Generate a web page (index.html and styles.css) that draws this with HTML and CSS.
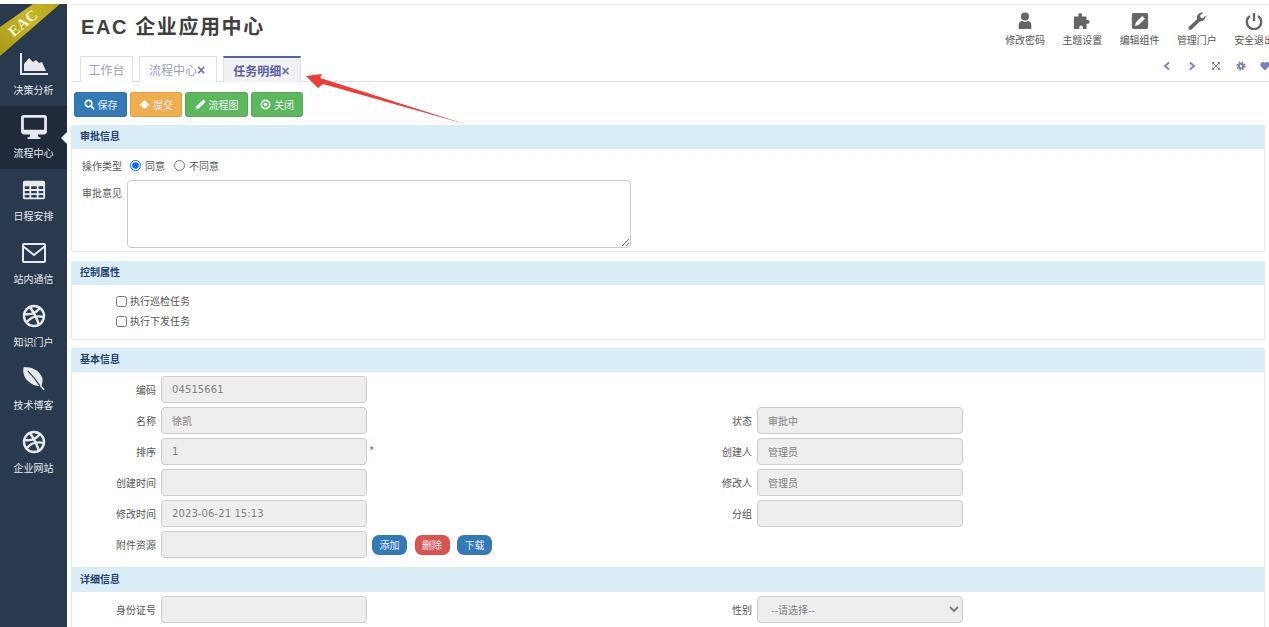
FILE: index.html
```html
<!DOCTYPE html>
<html lang="zh">
<head>
<meta charset="utf-8">
<title>EAC 企业应用中心</title>
<link rel="stylesheet" href="styles.css">
</head>
<body>
<div class="app">
  <aside class="sidebar">
    <div class="ribbon"></div>
    <div class="ribbon-text">EAC</div>
    <nav class="nav">
      <a class="nav-item">
        <svg class="nav-icon" viewBox="0 0 28 22"><path d="M0 0h2v20h26v2H0z"/><path d="M4 18V11l5-6 4 4 3-2 3 3 3-1 4 9z"/></svg>
        <span>决策分析</span>
      </a>
      <a class="nav-item active">
        <svg class="nav-icon" viewBox="0 0 28 26"><path fill-rule="evenodd" d="M3 0h22a3 3 0 0 1 3 3v15a3 3 0 0 1-3 3h-7l1 3h2v2H7v-2h2l1-3H3a3 3 0 0 1-3-3V3a3 3 0 0 1 3-3zm0 3v13h22V3z"/></svg>
        <span>流程中心</span>
      </a>
      <a class="nav-item">
        <svg class="nav-icon" viewBox="-1.500 -3 27 26"><path fill-rule="evenodd" d="M2 0h20a2 2 0 0 1 2 2v16a2 2 0 0 1-2 2H2a2 2 0 0 1-2-2V2a2 2 0 0 1 2-2zm0 6v3h5V6zm7 0v3h6V6zm8 0v3h5V6zM2 11v2.500h5V11zm7 0v2.500h6V11zm8 0v2.500h5V11zM2 15.500V18h5v-2.500zm7 0V18h6v-2.500zm8 0V18h5v-2.500z"/></svg>
        <span>日程安排</span>
      </a>
      <a class="nav-item">
        <svg class="nav-icon" viewBox="-2 -2 28 24"><path fill-rule="evenodd" d="M2 0h20a2 2 0 0 1 2 2v16a2 2 0 0 1-2 2H2a2 2 0 0 1-2-2V2a2 2 0 0 1 2-2zm0 2v.800l10 8 10-8V2zm0 3.300V18h20V5.300l-10 8z"/></svg>
        <span>站内通信</span>
      </a>
      <a class="nav-item">
        <svg class="nav-icon ball" viewBox="0 0 24 24"><circle cx="12" cy="12" r="10"/><path d="M8 3c4 6 8 13 9 19M3 10c6 1 11-1 15-6M5 18c3-4 8-7 17-5"/></svg>
        <span>知识门户</span>
      </a>
      <a class="nav-item">
        <svg class="nav-icon" viewBox="1 1 23 25"><path d="M2 1c8 0 16 3 19 11 1 4 0 7-1 9C12 21 4 16 2 9 1 6 1 3 2 1z"/><path class="vein" d="M6 5c5 5 9 10 13 16"/><path class="stem" d="M19 20l4 5"/></svg>
        <span>技术博客</span>
      </a>
      <a class="nav-item">
        <svg class="nav-icon ball" viewBox="0 0 24 24"><circle cx="12" cy="12" r="10"/><path d="M8 3c4 6 8 13 9 19M3 10c6 1 11-1 15-6M5 18c3-4 8-7 17-5"/></svg>
        <span>企业网站</span>
      </a>
    </nav>
  </aside>

  <main class="main">
    <header class="header">
      <div class="header-left">
        <h1 class="title">EAC 企业应用中心</h1>
        <div class="tabs">
          <a class="tab">工作台</a>
          <a class="tab">流程中心<b class="x">×</b></a>
          <a class="tab current">任务明细<b class="x">×</b></a>
        </div>
      </div>
      <div class="header-right">
        <div class="tools">
          <a class="tool">
            <svg class="tool-icon" viewBox="0 0 20 20"><circle cx="10" cy="5" r="4.500"/><path d="M3 19v-4.500c0-3 2-4.500 4-4.500l3 1 3-1c2 0 4 1.500 4 4.500V19z"/></svg>
            <span>修改密码</span>
          </a>
          <a class="tool">
            <svg class="tool-icon" viewBox="0 0 20 20"><path d="M1 5h5V3a2 2 0 1 1 4 0v2h5v4h1.500a2 2 0 1 1 0 4H15v6h-4v-2a1.800 1.800 0 1 0-4 0v2H1z"/></svg>
            <span>主题设置</span>
          </a>
          <a class="tool">
            <svg class="tool-icon" viewBox="0 0 20 20"><path fill-rule="evenodd" d="M3 1h14a2 2 0 0 1 2 2v14a2 2 0 0 1-2 2H3a2 2 0 0 1-2-2V3a2 2 0 0 1 2-2zm9.500 3.500L5.500 11.500l-1 4 4-1 7-7z"/></svg>
            <span>编辑组件</span>
          </a>
          <a class="tool">
            <svg class="tool-icon" viewBox="0 0 20 20"><path d="M1 16.500 10 8c-.8-3 .8-6.500 5-7.500 1-.1 1.700 0 2 .2L13.500 4l.5 2.500 2.500.5L19.500 3.800c.3 3.500-2 6.800-6.500 6.700L4 19.500c-1 .8-2 .7-2.800-.1-.8-.8-.9-1.900-.2-2.900z"/></svg>
            <span>管理门户</span>
          </a>
          <a class="tool">
            <svg class="tool-icon power" viewBox="0 0 20 20"><path d="M5.500 4.500a8 8 0 1 0 9 0M10 1v9"/></svg>
            <span>安全退出</span>
          </a>
        </div>
        <div class="mini">
          <svg viewBox="0 0 10 10"><path class="line" d="M7 1.500 3 5l4 3.500"/></svg>
          <svg viewBox="0 0 10 10"><path class="line" d="M3 1.500 7 5 3 8.500"/></svg>
          <svg viewBox="0 0 10 10"><path class="thin" d="M2 2l6 6M8 2 2 8"/><path d="M1 1h3L1 4zM9 1v3L6 1zM1 9V6l3 3zM9 9H6l3-3z"/></svg>
          <svg viewBox="0 0 10 10"><circle cx="5" cy="5" r="3.200"/><circle class="teeth" cx="5" cy="5" r="3.800"/><circle class="hole" cx="5" cy="5" r="1.200"/></svg>
          <svg viewBox="0 0 10 10"><path d="M5 9.500 1 5.500C-.5 3.500.8 1 3 1c1 0 1.600.5 2 1.200C5.400 1.500 6 1 7 1c2.200 0 3.500 2.500 2 4.500z"/></svg>
        </div>
      </div>
    </header>

    <div class="content">
      <div class="toolbar">
        <button class="btn blue"><svg viewBox="0 0 12 12"><circle class="ring" cx="5" cy="5" r="3.500"/><path class="ring" d="M7.500 7.500 11 11"/></svg>保存</button>
        <button class="btn orange narrow"><svg viewBox="0 0 12 12"><path d="M6 1 12 7H8.500v3h-5V7H0z"/></svg>提交</button>
        <button class="btn green wide"><svg viewBox="0 0 12 12"><path d="M9 .5 11.500 3 4 10.500 .5 11.500 1.500 8z"/></svg>流程图</button>
        <button class="btn green narrow"><svg viewBox="0 0 12 12"><circle class="ring" cx="6" cy="6" r="4.500"/><circle cx="6" cy="6" r="2"/></svg>关闭</button>
      </div>

      <section class="panel p-approve">
        <h2 class="panel-head">审批信息</h2>
        <div class="approve-body">
          <div class="approve-row">
            <span class="approve-label">操作类型</span>
            <label class="choice"><input type="radio" name="op" checked>同意</label>
            <label class="choice"><input type="radio" name="op">不同意</label>
          </div>
          <div class="approve-row top">
            <span class="approve-label">审批意见</span>
            <textarea class="opinion"></textarea>
          </div>
        </div>
      </section>

      <section class="panel p-control">
        <h2 class="panel-head">控制属性</h2>
        <div class="control-body">
          <label class="check"><input type="checkbox">执行巡检任务</label>
          <label class="check"><input type="checkbox">执行下发任务</label>
        </div>
      </section>

      <section class="panel p-basic">
        <h2 class="panel-head">基本信息</h2>
        <div class="form-grid">
          <label class="lbl">编码</label><input class="field num" disabled value="04515661"><span class="after"></span>
          <span class="lbl"></span><span class="blank"></span>

          <label class="lbl">名称</label><input class="field" disabled value="徐凯"><span class="after"></span>
          <label class="lbl">状态</label><input class="field" disabled value="审批中">

          <label class="lbl">排序</label><input class="field num" disabled value="1"><span class="after req">*</span>
          <label class="lbl">创建人</label><input class="field" disabled value="管理员">

          <label class="lbl">创建时间</label><input class="field" disabled><span class="after"></span>
          <label class="lbl">修改人</label><input class="field" disabled value="管理员">

          <label class="lbl">修改时间</label><input class="field num" disabled value="2023-06-21 15:13"><span class="after"></span>
          <label class="lbl">分组</label><input class="field" disabled>

          <label class="lbl">附件资源</label><input class="field" disabled>
          <span class="after actions"><button class="pill blue">添加</button><button class="pill red">删除</button><button class="pill blue">下载</button></span>
          <span class="lbl"></span><span class="blank"></span>
        </div>
        <h2 class="panel-head detail">详细信息</h2>
        <div class="form-grid">
          <label class="lbl">身份证号</label><input class="field" disabled><span class="after"></span>
          <label class="lbl">性别</label>
          <select class="field"><option>--请选择--</option></select>
        </div>
      </section>
    </div>

    <svg class="arrow" viewBox="0 0 170 60"><path d="M6 6 22 4 20 8 165 54 23 14 18 18z"/></svg>
  </main>
</div>
</body>
</html>
```

FILE: styles.css
```css
* { box-sizing: border-box; }
html, body { margin: 0; height: 100%; overflow: hidden; }
body {
  padding-top: 4px;
  background: #fff;
  color: #555;
  font: 10px/1.4 "Noto Sans CJK SC", "Liberation Sans", sans-serif;
}
.app { display: flex; height: 623px; position: relative; }

/* sidebar */
.sidebar {
  width: 67px;
  flex: none;
  background: #2a3a4e;
  color: #e6e9ee;
  position: relative;
  overflow: hidden;
}
.ribbon {
  position: absolute;
  left: 0;
  top: 0;
  width: 60px;
  height: 52px;
  background: linear-gradient(45deg, #a89a12, #c7b52a 60%, #b5a518);
  clip-path: polygon(0 23px, 33px 0, 60px 0, 0 52px);
}
.ribbon-text {
  position: absolute;
  left: 3px;
  top: 9px;
  width: 40px;
  text-align: center;
  color: #f6f3d8;
  font: bold 15px/20px "Liberation Serif", serif;
  letter-spacing: .5px;
  transform: rotate(-40deg);
}
.nav { padding-top: 39px; display: flex; flex-direction: column; }
.nav-item {
  height: 63px;
  display: flex;
  flex-direction: column;
  align-items: center;
  justify-content: flex-end;
  gap: 7px;
  padding-bottom: 9px;
  position: relative;
  font-size: 10px;
  line-height: 14px;
}
.nav-item.active { background: #1f2a3a; }
.nav-item.active::after {
  content: "";
  position: absolute;
  right: 0;
  top: 26px;
  border: 6px solid transparent;
  border-right-color: #fff;
  border-left-width: 0;
}
.nav-icon { width: 28px; height: 24px; fill: #e8e9ec; }
.nav-icon.ball { fill: none; stroke: #e8e9ec; stroke-width: 2.400; }
.nav-icon .vein { fill: none; stroke: #2a3a4e; stroke-width: 1.200; }
.nav-icon .stem { fill: none; stroke: #e8e9ec; stroke-width: 1.400; }

/* main */
.main { flex: 1; min-width: 0; position: relative; display: flex; flex-direction: column; overflow: hidden; }
.header {
  height: 78px;
  flex: none;
  display: flex;
  justify-content: space-between;
  border-top: 1px solid #e6e6e6;
  border-bottom: 1px solid #e0e0e0;
  margin-left: 5px;
}
.header-left { padding: 8px 0 0 9px; display: flex; flex-direction: column; justify-content: space-between; }
.title {
  margin: 0;
  color: #3f3f3f;
  font: 700 20px/29px "Liberation Sans", "Noto Sans CJK SC", sans-serif;
  letter-spacing: 1.600px;
}
.tabs { display: flex; gap: 6px; margin-left: -1px; margin-bottom: -1px; position: relative; }
.tab {
  height: 26px;
  padding: 0 11px 0 9px;
  border: 1px solid #e1e1e6;
  border-bottom: 0;
  color: #9a9ec0;
  font-size: 12px;
  line-height: 25px;
  background: #fff;
}
.tab:first-child { padding: 0 7.500px; }
.tab.current {
  border-top: 2px solid #5a609f;
  background: #f1f1f3;
  color: #5a609f;
  font-weight: 700;
}
.x { color: #6f75ab; font: 700 14px "Liberation Sans", sans-serif; }

.header-right { width: 276px; flex: none; overflow: hidden; display: flex; flex-direction: column; align-items: flex-end; }
.tools { display: flex; width: 290px; flex: none; margin-right: -17.500px; padding-top: 7px; }
.tool {
  width: 57.250px;
  flex: none;
  display: flex;
  flex-direction: column;
  align-items: center;
  gap: 3px;
  color: #555;
  line-height: 14px;
  white-space: nowrap;
}
.tool-icon { width: 18px; height: 18px; fill: #666; }
.tool-icon.power { fill: none; stroke: #666; stroke-width: 2.600; }
.mini { display: flex; gap: 14.500px; margin-top: 14px; margin-right: -1px; }
.mini svg { width: 10px; height: 10px; fill: #7b80bd; flex: none; }
.mini .line { fill: none; stroke: #7b80bd; stroke-width: 1.800; }
.mini .thin { fill: none; stroke: #7b80bd; stroke-width: 1; }
.mini .teeth { fill: none; stroke: #7b80bd; stroke-width: 1.600; stroke-dasharray: 1.500 1.500; }
.mini .hole { fill: #fff; }

/* content */
.content { flex: 1; min-height: 0; padding-top: 10px; overflow: hidden; }
.toolbar { display: flex; gap: 3px; padding-left: 7px; margin-bottom: 8px; height: 25px; }
.btn {
  height: 25px;
  width: 53px;
  border: 1px solid rgba(0,0,0,.08);
  border-radius: 3px;
  color: #eef;
  font: 10px/1 "Noto Sans CJK SC", sans-serif;
  display: flex;
  align-items: center;
  justify-content: center;
  gap: 3px;
  padding: 0;
}
.btn.narrow { width: 52px; }
.btn.wide { width: 63px; }
.btn svg { width: 11px; height: 11px; fill: #fff; }
.btn .ring { fill: none; stroke: #fff; stroke-width: 1.800; }
.blue { background: #337ab7; }
.orange { background: #f0ad4e; }
.green { background: #5cb85c; }
.red { background: #d9534f; }

.panel { margin: 0 4px; border: 1px solid #e8e8e8; border-top: 0; border-radius: 2px; }
.panel-head {
  margin: 0;
  height: 24px;
  padding: 0 8px;
  background: #d9edf7;
  color: #23406b;
  font-size: 10px;
  line-height: 22px;
  font-weight: 700;
}
.p-approve { height: 127px; margin-bottom: 9px; }
.approve-body { padding: 8px 0 0 10px; }
.approve-row { display: flex; align-items: center; height: 17px; margin-bottom: 6px; }
.approve-row.top { align-items: flex-start; height: auto; margin: 0; }
.approve-label { width: 45px; flex: none; line-height: 17px; }
.approve-row .approve-label + .choice { margin-left: 3px; }
.approve-row.top .approve-label { line-height: 26px; }
.choice { display: flex; align-items: center; gap: 4px; margin-right: 9px; }
.choice input { margin: 0; width: 11px; height: 11px; accent-color: #0d6efd; }
.opinion { width: 504px; height: 68px; margin: 0; border: 1px solid #ccc; border-radius: 4px; display: block; background: #fff; }

.p-control { height: 79px; margin-bottom: 8px; }
.control-body { padding: 8px 0 0 44px; display: flex; flex-direction: column; gap: 4px; }
.check { display: flex; align-items: center; gap: 3px; height: 16px; }
.check input { margin: 0; width: 11px; height: 11px; }

.p-basic { border-bottom: 0; }
.form-grid {
  display: grid;
  grid-template-columns: 89px 206px 340px 50px 206px;
  grid-auto-rows: 27px;
  row-gap: 4px;
  align-items: center;
  padding-top: 4px;
  padding-bottom: 9px;
}
.lbl { text-align: right; padding-right: 5px; color: #555; }
.field {
  height: 27px;
  width: 206px;
  margin: 0;
  padding: 0 10px;
  background: #eee;
  border: 1px solid #ccc;
  border-radius: 4px;
  color: #808080;
  font: 10px "Noto Sans CJK SC", sans-serif;
  opacity: 1;
}
.field.num { font: 10px "DejaVu Sans", sans-serif; letter-spacing: .1px; }
select.field { padding-left: 9px; }
.after { padding-left: 2px; }
.req { color: #e0565a; font-size: 12px; }
.actions { display: flex; gap: 7.500px; padding-left: 5px; }
.pill {
  width: 35px;
  height: 20px;
  padding: 0;
  border: 0;
  border-radius: 7px;
  color: #eef;
  font: 10px/20px "Noto Sans CJK SC", sans-serif;
}
.panel-head.detail { height: 25px; line-height: 24px; }

.arrow { position: absolute; left: 233px; top: 66px; width: 170px; height: 60px; fill: #f23a36; pointer-events: none; }
```
